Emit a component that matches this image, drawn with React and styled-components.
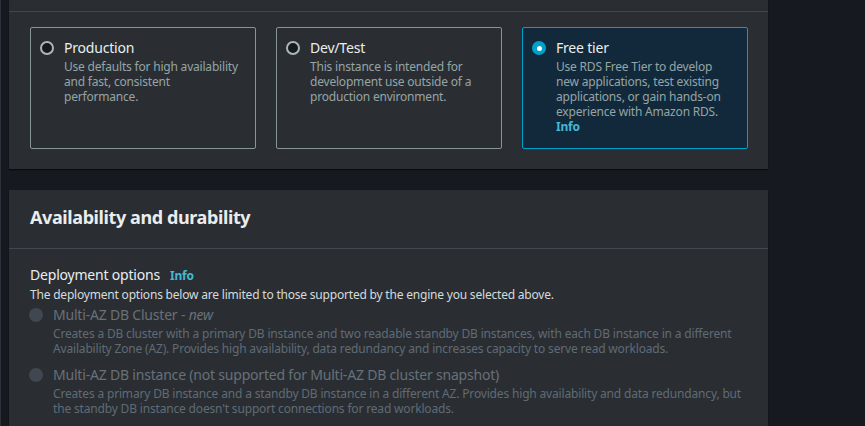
import React from "react";
import styled, { createGlobalStyle } from "styled-components";

const Global = createGlobalStyle`
  html, body { margin: 0; padding: 0; background: #16191f; }
  body { font-family: "Noto Sans", "Open Sans", Arial, sans-serif; -webkit-font-smoothing: antialiased; }
  * { box-sizing: border-box; }
`;

const Page = styled.div`
  width: 865px;
  height: 426px;
  overflow: hidden;
  background: #16191f;
  padding-left: 9px;
  border-left: 1px solid #2c3037;
  display: flex;
  flex-direction: column;
  gap: 21px;
`;

const Panel = styled.section`
  width: 759px;
  margin-left: -1px;
  background: #2a2e33;
  box-shadow: 0 1px 1px 0 rgba(0, 0, 0, 0.6);
  flex-shrink: 0;
`;

const ClippedHeader = styled.div`
  height: 12px;
  border-bottom: 1px solid #414750;
`;

const CardRow = styled.div`
  display: grid;
  grid-template-columns: repeat(3, 226px);
  column-gap: 20px;
  padding: 15px 20px 20px 21px;
`;

const Card = styled.div`
  height: 122px;
  border: 1px solid ${(p) => (p.$selected ? "#00a1c9" : "#879596")};
  background: ${(p) => (p.$selected ? "#12293b" : "transparent")};
  border-radius: 2px;
  padding: 11px 10px 10px 9px;
  display: flex;
  gap: 10px;
  align-items: flex-start;
`;

const Radio = styled.span`
  flex: none;
  width: 14px;
  height: 14px;
  border-radius: 50%;
  margin-top: ${(p) => p.$top || 3}px;
  display: flex;
  align-items: center;
  justify-content: center;
  background: ${(p) => (p.$checked ? "#00a1c9" : p.$disabled ? "#414750" : "#16191f")};
  border: ${(p) => (p.$checked || p.$disabled ? "none" : "2px solid #aab7b8")};
  &::after {
    content: "";
    display: ${(p) => (p.$checked ? "block" : "none")};
    width: 5px;
    height: 5px;
    border-radius: 50%;
    background: #ffffff;
  }
`;

const CardText = styled.div`
  display: flex;
  flex-direction: column;
`;

const CardTitle = styled.div`
  font-size: 14px;
  line-height: 18px;
  color: #eaeded;
  letter-spacing: -0.2px;
`;

const CardDesc = styled.div`
  font-size: 12px;
  line-height: 15px;
  color: #95a5a6;
  margin-top: 2px;
  letter-spacing: -0.2px;
`;

const Link = styled.span`
  color: #44b9d6;
  font-weight: 700;
  font-size: 12px;
  letter-spacing: -0.2px;
`;

const PanelHeader = styled.div`
  height: 59px;
  padding: 0 21px 5px;
  display: flex;
  align-items: center;
  border-bottom: 1px solid #414750;
`;

const Heading = styled.h2`
  margin: 0;
  font-size: 18px;
  font-weight: 700;
  color: #eaeded;
  letter-spacing: -0.4px;
`;

const PanelBody = styled.div`
  padding: 17px 21px 20px 21px;
`;

const FieldLabel = styled.div`
  font-size: 14px;
  line-height: 18px;
  color: #eaeded;
  letter-spacing: -0.2px;
  display: flex;
  align-items: baseline;
  gap: 10px;
`;

const FieldDesc = styled.div`
  font-size: 12px;
  line-height: 16px;
  color: #d5dbdb;
  margin-top: 2px;
  letter-spacing: -0.2px;
`;

const OptionList = styled.div`
  margin-top: 3px;
  display: flex;
  flex-direction: column;
  gap: 10px;
`;

const Option = styled.div`
  display: flex;
  gap: 10px;
  align-items: flex-start;
  margin-left: -1px;
`;

const OptionLabel = styled.div`
  font-size: 14px;
  line-height: 18px;
  color: #687078;
  letter-spacing: -0.2px;
  white-space: nowrap;
  em { font-style: italic; }
`;

const OptionDesc = styled.div`
  font-size: 12px;
  line-height: 15px;
  color: #5f6b75;
  margin-top: 2px;
  letter-spacing: -0.17px;
  white-space: nowrap;
`;

const tiers = [
  {
    title: "Production",
    desc: "Use defaults for high availability and fast, consistent performance.",
  },
  {
    title: "Dev/Test",
    desc: "This instance is intended for development use outside of a production environment.",
  },
  {
    title: "Free tier",
    desc: "Use RDS Free Tier to develop new applications, test existing applications, or gain hands-on experience with Amazon RDS.",
    info: true,
    selected: true,
  },
];

export default function App() {
  return (
    <>
      <Global />
      <Page>
        <Panel>
          <ClippedHeader />
          <CardRow>
            {tiers.map((t) => (
              <Card key={t.title} $selected={t.selected}>
                <Radio $checked={t.selected} $top={2} />
                <CardText>
                  <CardTitle>{t.title}</CardTitle>
                  <CardDesc>
                    {t.desc}
                    {t.info && (
                      <>
                        <br />
                        <Link>Info</Link>
                      </>
                    )}
                  </CardDesc>
                </CardText>
              </Card>
            ))}
          </CardRow>
        </Panel>
        <Panel>
          <PanelHeader>
            <Heading>Availability and durability</Heading>
          </PanelHeader>
          <PanelBody>
            <FieldLabel>
              Deployment options <Link>Info</Link>
            </FieldLabel>
            <FieldDesc>
              The deployment options below are limited to those supported by the engine you selected above.
            </FieldDesc>
            <OptionList>
              <Option>
                <Radio $disabled $top={2} />
                <CardText>
                  <OptionLabel>
                    Multi-AZ DB Cluster - <em>new</em>
                  </OptionLabel>
                  <OptionDesc>
                    Creates a DB cluster with a primary DB instance and two readable standby DB instances, with each DB instance in a different
                    <br />
                    Availability Zone (AZ). Provides high availability, data redundancy and increases capacity to serve read workloads.
                  </OptionDesc>
                </CardText>
              </Option>
              <Option>
                <Radio $disabled $top={2} />
                <CardText>
                  <OptionLabel>
                    Multi-AZ DB instance (not supported for Multi-AZ DB cluster snapshot)
                  </OptionLabel>
                  <OptionDesc>
                    Creates a primary DB instance and a standby DB instance in a different AZ. Provides high availability and data redundancy, but
                    <br />
                    the standby DB instance doesn't support connections for read workloads.
                  </OptionDesc>
                </CardText>
              </Option>
            </OptionList>
          </PanelBody>
        </Panel>
      </Page>
    </>
  );
}
